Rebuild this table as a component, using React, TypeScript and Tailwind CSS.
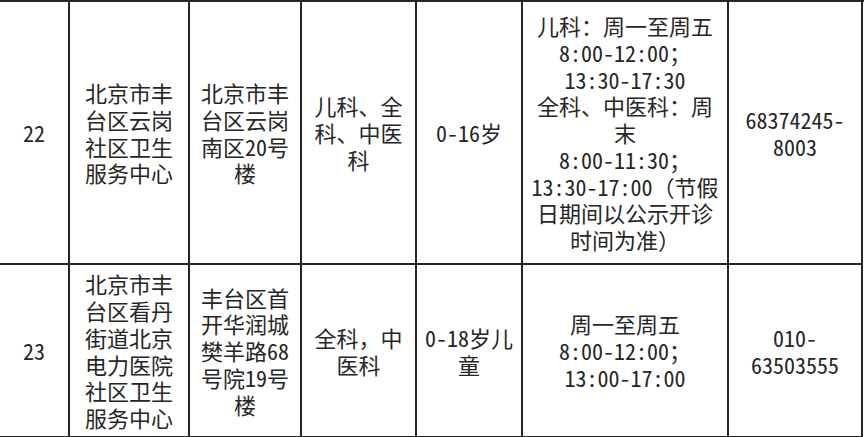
const rows = [
  {
    no: '22',
    name: ['北京市丰', '台区云岗', '社区卫生', '服务中心'],
    addr: ['北京市丰', '台区云岗', '南区20号', '楼'],
    dept: ['儿科、全', '科、中医', '科'],
    age: ['0-16岁'],
    hours: [
      '儿科：周一至周五',
      '8:00-12:00；',
      '13:30-17:30',
      '全科、中医科：周',
      '末',
      '8:00-11:30；',
      '13:30-17:00（节假',
      '日期间以公示开诊',
      '时间为准）',
    ],
    phone: ['68374245-', '8003'],
  },
  {
    no: '23',
    name: ['北京市丰', '台区看丹', '街道北京', '电力医院', '社区卫生', '服务中心'],
    addr: ['丰台区首', '开华润城', '樊羊路68', '号院19号', '楼'],
    dept: ['全科，中', '医科'],
    age: ['0-18岁儿', '童'],
    hours: ['周一至周五', '8:00-12:00；', '13:00-17:00'],
    phone: ['010-', '63503555'],
  },
]

function Cell({ lines }: { lines: string[] }) {
  return (
    <div className="flex flex-col items-center justify-center border-r-2 border-b-2 border-[#262626]">
      {lines.map((l, i) => (
        <div key={i} className="whitespace-nowrap leading-[26.7px]">
          {l}
        </div>
      ))}
    </div>
  )
}

export default function App() {
  return (
    <div className="w-[864px] h-[437px] overflow-hidden bg-white text-[#262626]">
      <div
        className="grid grid-cols-[70px_120px_112px_115px_106px_206px_134px] grid-rows-[263px_173px] border-t-2 border-[#262626] text-[22px] font-light"
        style={{ fontFamily: '"Noto Sans Mono CJK SC", "Noto Sans CJK SC", sans-serif' }}
      >
        {rows.map((r) => (
          <div key={r.no} className="contents">
            <Cell lines={[r.no]} />
            <Cell lines={r.name} />
            <Cell lines={r.addr} />
            <Cell lines={r.dept} />
            <Cell lines={r.age} />
            <Cell lines={r.hours} />
            <Cell lines={r.phone} />
          </div>
        ))}
      </div>
    </div>
  )
}
